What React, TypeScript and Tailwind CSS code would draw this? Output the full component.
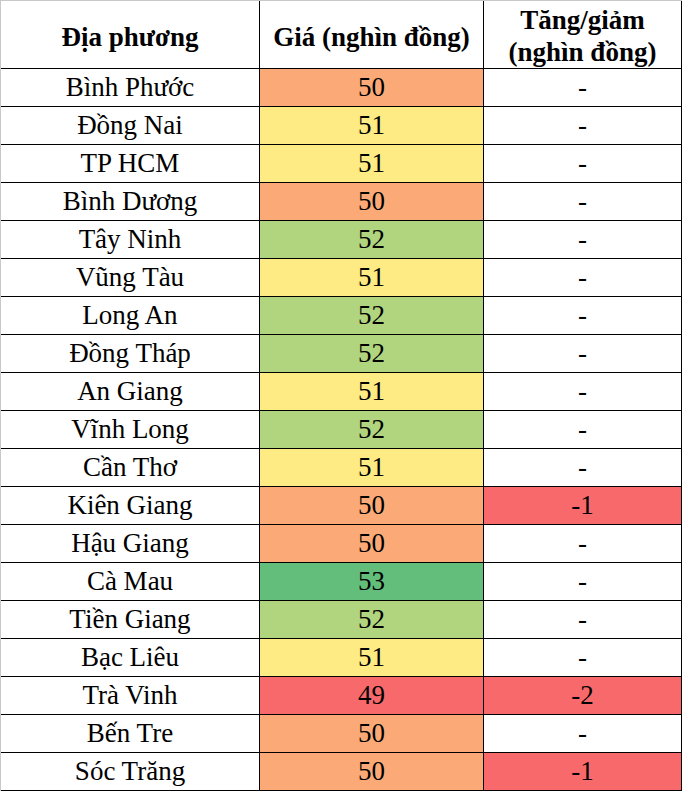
import React from 'react';

type Row = { name: string; price: number; change: string };

const rows: Row[] = [
  { name: 'Bình Phước', price: 50, change: '-' },
  { name: 'Đồng Nai', price: 51, change: '-' },
  { name: 'TP HCM', price: 51, change: '-' },
  { name: 'Bình Dương', price: 50, change: '-' },
  { name: 'Tây Ninh', price: 52, change: '-' },
  { name: 'Vũng Tàu', price: 51, change: '-' },
  { name: 'Long An', price: 52, change: '-' },
  { name: 'Đồng Tháp', price: 52, change: '-' },
  { name: 'An Giang', price: 51, change: '-' },
  { name: 'Vĩnh Long', price: 52, change: '-' },
  { name: 'Cần Thơ', price: 51, change: '-' },
  { name: 'Kiên Giang', price: 50, change: '-1' },
  { name: 'Hậu Giang', price: 50, change: '-' },
  { name: 'Cà Mau', price: 53, change: '-' },
  { name: 'Tiền Giang', price: 52, change: '-' },
  { name: 'Bạc Liêu', price: 51, change: '-' },
  { name: 'Trà Vinh', price: 49, change: '-2' },
  { name: 'Bến Tre', price: 50, change: '-' },
  { name: 'Sóc Trăng', price: 50, change: '-1' },
];

// Excel style colour scale, red -> yellow -> green
const priceColor: Record<number, string> = {
  49: 'bg-[#f8696b]',
  50: 'bg-[#fbaa77]',
  51: 'bg-[#ffeb84]',
  52: 'bg-[#b1d47f]',
  53: 'bg-[#63be7b]',
};

const cell = 'flex items-center justify-center border-b border-r border-black';

const App: React.FC = () => {
  return (
    <div className="bg-white w-[687px] h-[795px] text-black font-['Liberation_Serif',serif]">
      <div className="w-[682px] border-t border-l border-[#c8c8c8]">
        <div className="grid grid-cols-[259px_224px_198px]">
          {/* Header */}
          <div className={`${cell} h-[68px] text-[27px] font-bold pt-[6px]`}>Địa phương</div>
          <div className={`${cell} h-[68px] text-[27px] font-bold pt-[6px]`}>Giá (nghìn đồng)</div>
          <div className={`${cell} h-[68px] text-[27px] font-bold flex-col leading-[32px] pt-[2px]`}>
            <span>Tăng/giảm</span>
            <span>(nghìn đồng)</span>
          </div>

          {rows.map((r) => (
            <React.Fragment key={r.name}>
              <div className={`${cell} h-[38px] text-[27px]`}>{r.name}</div>
              <div className={`${cell} h-[38px] text-[27px] ${priceColor[r.price]}`}>{r.price}</div>
              <div className={`${cell} h-[38px] text-[27px] ${r.change !== '-' ? 'bg-[#f8696b]' : ''}`}>
                {r.change}
              </div>
            </React.Fragment>
          ))}
        </div>
      </div>
    </div>
  );
};

export default App;
